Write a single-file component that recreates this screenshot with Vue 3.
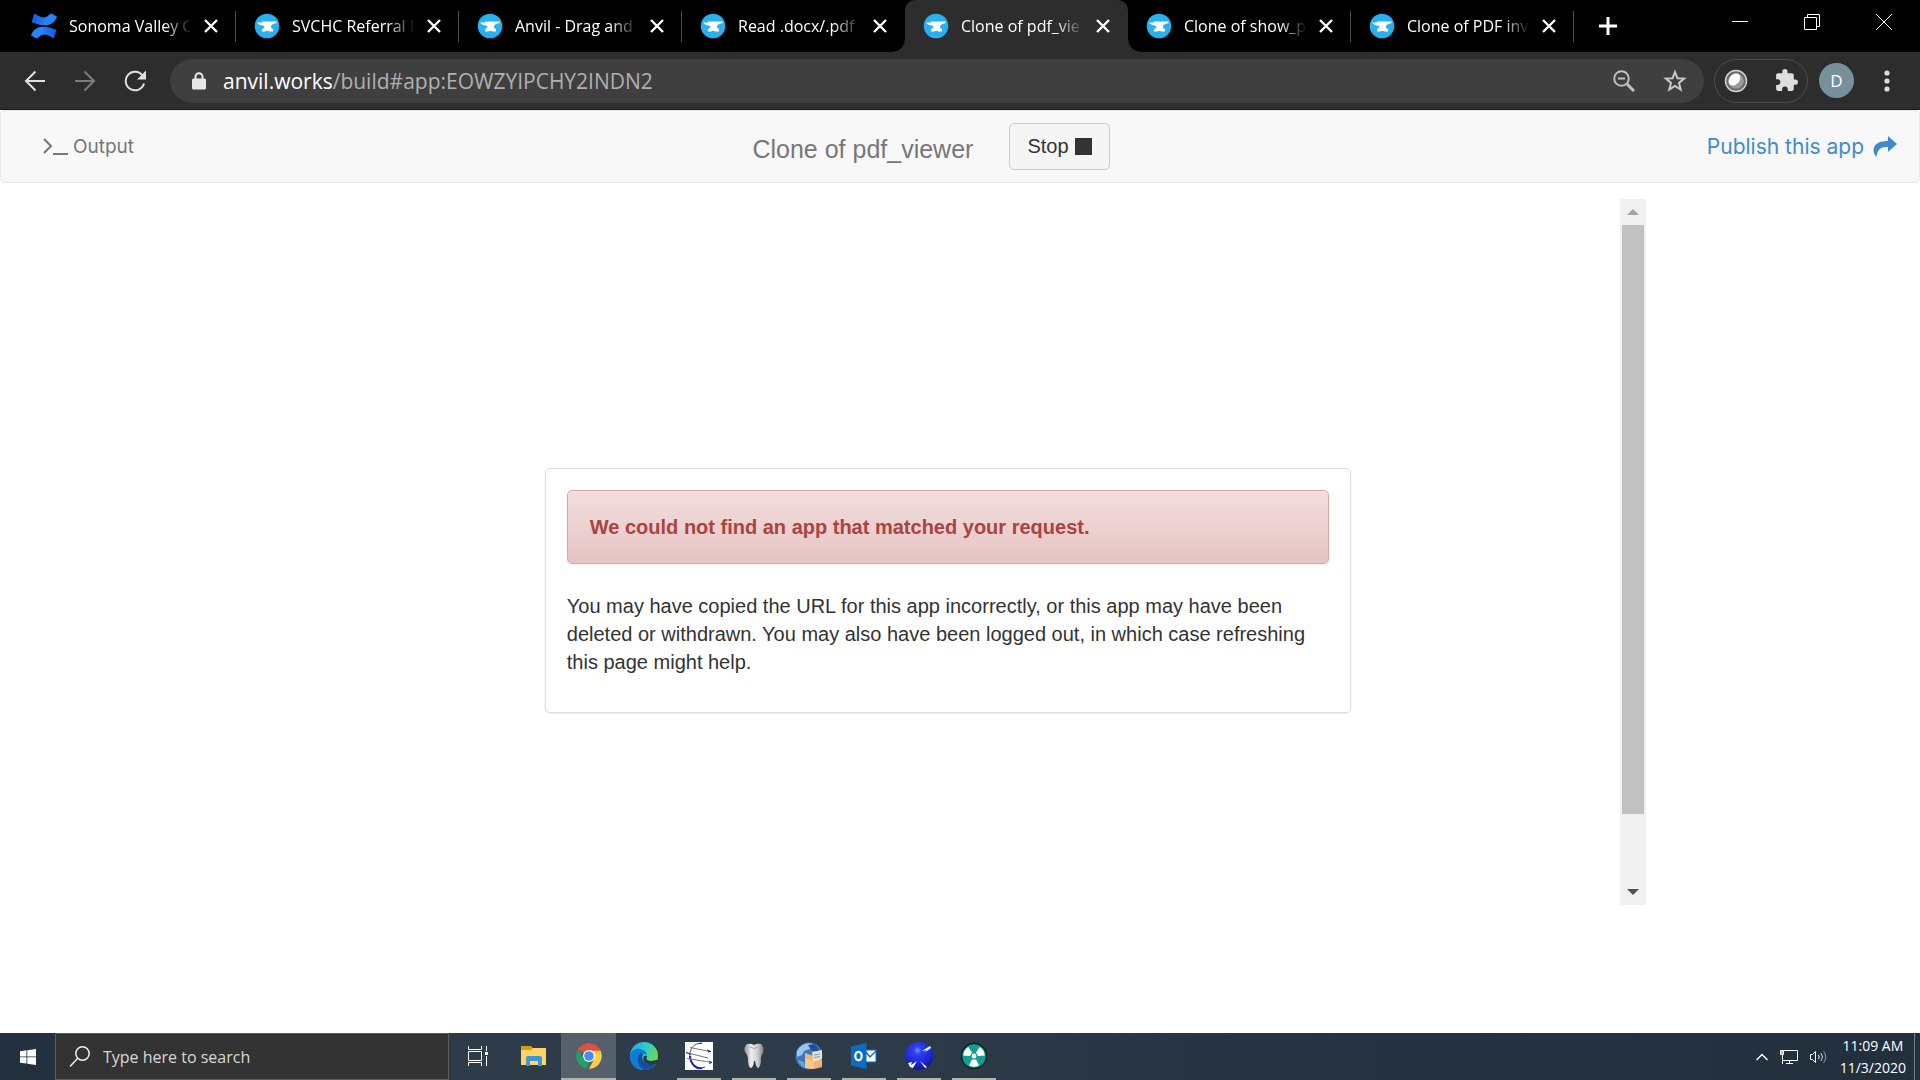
<template>
    <div class="screen">
        <header class="browser">
            <div class="tab-strip">
                <div v-for="(tab, index) in tabs" :key="tab.title" class="tab"
                    :class="{ active: index === activeTab, plain: index + 1 === activeTab }">
                    <button class="tab-title" @click="activeTab = index">
                        <svg v-if="tab.icon === 'confluence'" class="favicon" viewBox="0 0 26 26">
                            <defs>
                                <linearGradient id="conf-a" x1="0" y1="0" x2="1" y2="0">
                                    <stop offset="0" stop-color="#0f5bdc" />
                                    <stop offset="0.6" stop-color="#2684ff" />
                                </linearGradient>
                                <linearGradient id="conf-b" x1="1" y1="0" x2="0" y2="0">
                                    <stop offset="0" stop-color="#0f5bdc" />
                                    <stop offset="0.6" stop-color="#2684ff" />
                                </linearGradient>
                            </defs>
                            <path fill="url(#conf-a)"
                                d="M4 .8q5 3.700 8.500 3.700t6.500-3.200q.8-1 1.800-.5l4.500 2.400q.9.500.5 1.400-3.300 7-10.300 7.600Q8 12.500 1.300 9.500q-.8-.4-.5-1.300L3 1.500q.3-1 1-.7z" />
                            <path fill="url(#conf-b)"
                                d="M22 25.200q-5-3.700-8.500-3.700T7 24.700q-.8 1-1.800.5L.7 22.800q-.9-.5-.5-1.400 3.300-7 10.300-7.600 7.500-.3 14.200 2.700.8.400.5 1.300L23 24.500q-.3 1-1 .7z" />
                        </svg>
                        <svg v-else class="favicon" viewBox="0 0 26 26">
                            <circle cx="13" cy="13" r="12.3" fill="#28b1ec" />
                            <path fill="#fff"
                                d="M3 9.500h5v-.9h14.500v1.700c-3 .3-4.700 1.200-5.500 2.600-.4 1.400.5 2.500 2 3.200v2.500h-3.700c-.8-1.300-3.200-1.300-4 0H8v-2.500c1.700-.7 2.600-1.700 2.400-3.200-3-.2-5.800-1.200-7.400-3.400z" />
                        </svg>
                        <span class="tab-text">{{ tab.title }}</span>
                    </button>
                    <button class="tab-close" aria-label="Close tab">
                        <svg width="14" height="14" viewBox="0 0 14 14" stroke="#fff" stroke-width="2.4">
                            <path d="M1 1l12 12M13 1L1 13" />
                        </svg>
                    </button>
                </div>
                <button class="new-tab" aria-label="New tab">
                    <svg width="20" height="20" viewBox="0 0 20 20" stroke="#fff" stroke-width="3">
                        <path d="M10 1v18M1 10h18" />
                    </svg>
                </button>
                <div class="window-buttons">
                    <button aria-label="Minimize">
                        <svg width="16" height="16" viewBox="0 0 16 16"><path d="M0 7.500h16" /></svg>
                    </button>
                    <button aria-label="Restore">
                        <svg width="16" height="16" viewBox="0 0 16 16">
                            <path d="M.5 3.500h12v12H.5zM3.500 3V.5h12v12H13" />
                        </svg>
                    </button>
                    <button aria-label="Close">
                        <svg width="16" height="16" viewBox="0 0 16 16"><path d="M0 0l16 16M16 0L0 16" /></svg>
                    </button>
                </div>
            </div>

            <div class="toolbar">
                <div class="history">
                    <button aria-label="Back">
                        <svg width="22" height="22" viewBox="0 0 22 22" class="stroke">
                            <path d="M21 11H2M11.500 1.500L2 11l9.500 9.500" />
                        </svg>
                    </button>
                    <button aria-label="Forward" class="dim">
                        <svg width="22" height="22" viewBox="0 0 22 22" class="stroke">
                            <path d="M1 11h19M10.500 1.500L20 11l-9.500 9.500" />
                        </svg>
                    </button>
                    <button aria-label="Reload">
                        <svg width="22" height="22" viewBox="0 0 22 22">
                            <path class="stroke" d="M18.600 5.600A9.300 9.300 0 1 0 20 13.500" />
                            <path d="M22 .5V9.500h-9z" fill="currentColor" />
                        </svg>
                    </button>
                </div>
                <div class="omnibox">
                    <svg width="14" height="18" viewBox="0 0 14 18" class="lock">
                        <path d="M3.500 8V4.700a3.500 3.500 0 0 1 7 0V8" fill="none" stroke="#e8e8e8" stroke-width="2" />
                        <rect x="0" y="6.5" width="14" height="11" rx="1.5" fill="#e8e8e8" />
                    </svg>
                    <div class="url"><b>anvil.works</b>/build#app:EOWZYIPCHY2INDN2</div>
                    <button aria-label="Zoom">
                        <svg width="22" height="22" viewBox="0 0 22 22" fill="none" stroke="#c0c0c0"
                            stroke-width="2">
                            <circle cx="8.5" cy="8.5" r="7.3" />
                            <path d="M5 8.500h7" />
                            <path d="M14 14l7 7" stroke-width="3" />
                        </svg>
                    </button>
                    <button aria-label="Bookmark">
                        <svg width="24" height="24" viewBox="0 0 24 24" fill="none" stroke="#c8c8c8"
                            stroke-width="2">
                            <path
                                d="M12 3l2.400 6.200 6.800.4-5.200 4.300 1.700 6.600-5.700-3.600-5.700 3.600L8 13.900 2.800 9.600l6.800-.4z" />
                        </svg>
                    </button>
                </div>
                <div class="extensions">
                    <button aria-label="Extension">
                        <svg width="24" height="24" viewBox="0 0 24 24">
                            <circle cx="12" cy="12" r="10.5" fill="#686868" stroke="#d4d4d4" stroke-width="1.5" />
                            <circle cx="12" cy="12" r="7.8" fill="#999" />
                            <ellipse cx="10.5" cy="10.5" rx="5" ry="6.8" fill="#fff" transform="rotate(42 10.5 10.5)" />
                        </svg>
                    </button>
                    <button aria-label="Extensions">
                        <svg width="25" height="25" viewBox="0 0 24 24">
                            <path fill="#dedede"
                                d="M20.500 11H19V7c0-1.100-.9-2-2-2h-4V3.500a2.500 2.500 0 0 0-5 0V5H4c-1.100 0-2 .9-2 2v3.800h1.500a2.700 2.700 0 0 1 0 5.400H2V20c0 1.100.9 2 2 2h3.800v-1.500a2.700 2.700 0 0 1 5.400 0V22H17c1.100 0 2-.9 2-2v-4h1.500a2.500 2.500 0 0 0 0-5z" />
                        </svg>
                    </button>
                </div>
                <button class="avatar">D</button>
                <button class="menu" aria-label="Menu">
                    <svg width="6" height="22" viewBox="0 0 6 22" fill="#dedede">
                        <circle cx="3" cy="3" r="2.6" />
                        <circle cx="3" cy="11" r="2.6" />
                        <circle cx="3" cy="19" r="2.6" />
                    </svg>
                </button>
            </div>
        </header>

        <nav class="app-bar">
            <div class="side">
                <a href="#output" class="output">
                    <svg width="26" height="18" viewBox="0 0 26 18" fill="none" stroke="currentColor"
                        stroke-width="2">
                        <path d="M1 1l7 7-7 7M10 16h15" />
                    </svg>
                    <span>Output</span>
                </a>
            </div>
            <div class="run">
                <h1>Clone of pdf_viewer</h1>
                <button class="stop">Stop <span class="square"></span></button>
            </div>
            <div class="side right">
                <a href="#publish" class="publish">
                    <span>Publish this app</span>
                    <svg width="24" height="22" viewBox="0 0 24 22">
                        <path fill="#428bca" d="M15 0l9 8-9 8v-5C8 10.500 4.500 13 3.500 21 .5 18 0 14 1 11.500 2.500 7 8 5 15 5z" />
                    </svg>
                </a>
            </div>
        </nav>

        <main>
            <div class="frame">
                <div class="frame-body">
                    <section class="card">
                        <div class="alert" role="alert">We could not find an app that matched your request.</div>
                        <p>
                            You may have copied the URL for this app incorrectly, or this app may have been
                            deleted or withdrawn. You may also have been logged out, in which case refreshing
                            this page might help.
                        </p>
                    </section>
                </div>
                <div class="scrollbar">
                    <button aria-label="Scroll up">
                        <svg width="12" height="6" viewBox="0 0 12 6"><path d="M6 0l6 6H0z" fill="#a3a3a3" /></svg>
                    </button>
                    <div class="track">
                        <div class="thumb"></div>
                    </div>
                    <button aria-label="Scroll down">
                        <svg width="12" height="6" viewBox="0 0 12 6"><path d="M6 6l6-6H0z" fill="#505050" /></svg>
                    </button>
                </div>
            </div>
        </main>

        <footer class="taskbar">
            <button class="start" aria-label="Start">
                <svg width="16" height="16" viewBox="0 0 16 16" fill="#fff">
                    <path d="M0 2.200l6.500-.9v6.200H0zM7.300 1.200L16 0v7.500H7.300zM0 8.300h6.500v6.300L0 13.700zM7.300 8.300H16V16l-8.700-1.200z" />
                </svg>
            </button>
            <label class="search">
                <svg width="22" height="22" viewBox="0 0 22 22" fill="none" stroke="#f0f0f0" stroke-width="1.5">
                    <circle cx="13.5" cy="7.5" r="6.7" />
                    <path d="M8.700 12.300L1 20.500" />
                </svg>
                <input type="text" placeholder="Type here to search" aria-label="Type here to search">
            </label>
            <div class="apps">
                <button aria-label="Task View">
                    <svg width="22" height="20" viewBox="0 0 22 20" fill="none" stroke="#fff">
                        <path d="M.5 0v3.500h13V0M.5 5.500h13v9H.5zM.5 20v-3.500h13V20M18.500 0v5M18.500 10v10" />
                        <path d="M17 6h3v3h-3z" fill="#fff" stroke="none" />
                    </svg>
                </button>
                <button aria-label="File Explorer">
                    <svg width="28" height="24" viewBox="0 0 28 24">
                        <path d="M1 2h10l2 2v4H1z" fill="#d99a0c" />
                        <path d="M1 6h10l2-2h13v17H1z" fill="#ffd666" />
                        <path d="M6 22v-8q0-2 2-2h12q2 0 2 2v8h-4v-5h-8v5z" fill="#3a97da" />
                    </svg>
                </button>
                <button aria-label="Chrome" class="current">
                    <svg width="26" height="26" viewBox="0 0 26 26">
                        <path d="M13 13L1.900 6.600A12.800 12.800 0 0 1 24.100 6.600z" fill="#dd5144" />
                        <path d="M13 7.400h11.500A12.800 12.800 0 0 1 13 25.800l5-9.500z" fill="#ffcd46" />
                        <path d="M1.900 6.600l6 9.800L13 19l-2.500 6.500A12.800 12.800 0 0 1 1.900 6.600z" fill="#1da462" />
                        <path d="M2 6.600Q5 2 13 .2 21 1.500 24.500 7.400H13z" fill="#dd5144" />
                        <circle cx="13" cy="13" r="6" fill="#fff" />
                        <circle cx="13" cy="13" r="4.8" fill="#4c8bf5" />
                    </svg>
                </button>
                <button aria-label="Edge">
                    <svg width="28" height="28" viewBox="0 0 28 28">
                        <defs>
                            <linearGradient id="edge-top" x1="0" y1="0" x2="1" y2="0.5">
                                <stop offset="0" stop-color="#1ea5e3" />
                                <stop offset="0.5" stop-color="#32c8d2" />
                                <stop offset="1" stop-color="#6bdc4a" />
                            </linearGradient>
                        </defs>
                        <circle cx="14" cy="14" r="14" fill="url(#edge-top)" />
                        <path d="M0 14C.5 8 6 6 11 7c4 1 6 3.500 6 6-1-1-3-1.500-4-.5-3 3 0 9 5 9.500 3 .3 6-.5 8-1.500C23 25.500 19 28 14 28 6 28 0 22 0 14z" fill="#0c7ed8" />
                        <path d="M10.500 11c-4 3-4 12 3.500 17 5 0 9-2.500 12-7.500-5 3-12 1.500-13.500-4-.5-2 0-3 .5-4-1-.8-2-1.500-2.500-1.500z" fill="#134f9c" />
                        <path d="M17 14.500c-.3 1-1 2-.3 3 1.800 2 6.500 1.600 9.800.2l2 .3-1.700 3.200c-4.500 2.300-11.800 1.500-13.300-3.200-.5-2 0-4 1.500-4.500 1-.3 2 .1 2 1z" fill="#2c3945" />
                    </svg>
                </button>
                <button aria-label="Eclipse" class="open">
                    <svg width="28" height="28" viewBox="0 0 28 28" fill="none">
                        <path d="M0 0h28v28H0z" fill="#fff" />
                        <path d="M17 1.500C9 0 3.500 8 5 16" stroke="#555" />
                        <path d="M5 14c.5 8 6 13.500 12 12" stroke="#1d1db0" stroke-width="2" />
                        <path d="M5 5.500l20 4M1 10.500l22 5.500M2 16.500l25 4" stroke="#777" />
                        <path d="M22 8l4 1.500-3 .5M24 19l3 1.500-3 1M1 10.500l5 2M14 1.500l3-.5M17 26l3-1" stroke="#2222c8" />
                    </svg>
                </button>
                <button aria-label="Dental" class="open">
                    <svg width="20" height="26" viewBox="0 0 20 26">
                        <defs>
                            <linearGradient id="tooth" x1="0" y1="0" x2="1" y2="0">
                                <stop offset="0" stop-color="#8d8d8d" />
                                <stop offset="0.35" stop-color="#eee" />
                                <stop offset="0.7" stop-color="#ccc" />
                                <stop offset="1" stop-color="#777" />
                            </linearGradient>
                        </defs>
                        <path d="M3 1q3.500-1 7 1 3.500-2 7-1 4 3 2 9-3 4-2 8-1 7-3 7-2-1-3-7h-1q-.5 6-3 7-3-1-3-8Q4 12 1 9-1 4 3 1z" fill="url(#tooth)" />
                        <path d="M6 4q4 3 8 0" fill="none" stroke="#aaa" />
                    </svg>
                </button>
                <button aria-label="Network files" class="open">
                    <svg width="28" height="28" viewBox="0 0 28 28">
                        <circle cx="14" cy="14" r="13.5" fill="#3b78bf" />
                        <path d="M2 9Q8-1 18 2l-3 5-6 2-2 4-5 2z" fill="#9cc4e6" />
                        <path d="M13 3l6-1 5 5-2 3-6-2z" fill="#1f4f9c" />
                        <path d="M3 18l6 2 1 6q-5-2-7-8z" fill="#6ba3d8" />
                        <path d="M10 11l6 2 11 5v7l-8 2-9-1z" fill="#f4b276" />
                        <path d="M17 10l10-2v9l-9 3z" fill="#dce3dc" />
                        <path d="M19 13l6-1M19 15.500l6-1" stroke="#8c9b91" />
                        <path d="M10 16l9 3v8l-9-1z" fill="#fdc48c" />
                    </svg>
                </button>
                <button aria-label="Outlook" class="open">
                    <svg width="26" height="26" viewBox="0 0 26 26">
                        <path d="M14 7h11v12H14z" fill="#fff" stroke="#0a6cc4" />
                        <path d="M14 8l5 6 6-6" fill="none" stroke="#0a6cc4" stroke-width="1.5" />
                        <path d="M0 3.500L15.500 0v26L0 22.500z" fill="#0a6cc4" />
                        <ellipse cx="7.5" cy="13" rx="3.2" ry="4.2" fill="none" stroke="#fff" stroke-width="2.2" />
                    </svg>
                </button>
                <button aria-label="Blue sphere" class="open">
                    <svg width="28" height="28" viewBox="0 0 28 28">
                        <defs>
                            <radialGradient id="sphere" cx="0.45" cy="0.3" r="0.7">
                                <stop offset="0" stop-color="#7f8cff" />
                                <stop offset="0.2" stop-color="#2e42ee" />
                                <stop offset="0.7" stop-color="#1b25d6" />
                                <stop offset="1" stop-color="#111a78" />
                            </radialGradient>
                        </defs>
                        <circle cx="14" cy="14" r="14" fill="url(#sphere)" />
                        <path d="M25 4l-8 5 5-1-3 3 7-5zM3 21l4-1-1 3 6-4-4 7-3-1zM15 19l7 6-2 1z" fill="#fff" />
                    </svg>
                </button>
                <button aria-label="Imaging" class="open">
                    <svg width="28" height="28" viewBox="0 0 28 28">
                        <circle cx="14" cy="14" r="12.5" fill="#12a094" stroke="#06231f" stroke-width="1.5" />
                        <g fill="#fff">
                            <path d="M12 17.500h4l3 6q-5 2.500-10 0z" />
                            <path d="M12 17.500h4l3 6q-5 2.500-10 0z" transform="rotate(120 14 14)" />
                            <path d="M12 17.500h4l3 6q-5 2.500-10 0z" transform="rotate(240 14 14)" />
                            <circle cx="14" cy="14" r="3" stroke="#12a094" />
                        </g>
                    </svg>
                </button>
            </div>
            <div class="tray">
                <button aria-label="Show hidden icons">
                    <svg width="12" height="8" viewBox="0 0 12 8" fill="none" stroke="#fff" stroke-width="1.5">
                        <path d="M.5 7L6 1.500 11.500 7" />
                    </svg>
                </button>
                <button aria-label="Network">
                    <svg width="18" height="16" viewBox="0 0 18 16" fill="none" stroke="#fff">
                        <path d="M4 1.500h13.500v10H2.500V6M9.500 12v3M6 14.500h7M2.500 6v9" />
                        <path d="M.5 1.500h3v4h-3z" fill="#bbb" />
                    </svg>
                </button>
                <button aria-label="Volume">
                    <svg width="18" height="16" viewBox="0 0 18 16" fill="none" stroke="#fff">
                        <path d="M.5 5.500h2l3-3v11l-3-3h-2zM8.500 6q1.500 2 0 4" />
                        <path d="M11 4q3 4 0 8" opacity="0.8" />
                        <path d="M13.500 2q4.500 6 0 12" opacity="0.5" />
                    </svg>
                </button>
                <button class="clock">
                    <span>11:09 AM</span>
                    <span>11/3/2020</span>
                </button>
            </div>
        </footer>
    </div>
</template>

<script setup>
import { ref } from 'vue';

const activeTab = ref(4);

const tabs = [
    { icon: 'confluence', title: 'Sonoma Valley C' },
    { icon: 'anvil', title: 'SVCHC Referral F' },
    { icon: 'anvil', title: 'Anvil - Drag and' },
    { icon: 'anvil', title: 'Read .docx/.pdf' },
    { icon: 'anvil', title: 'Clone of pdf_vie' },
    { icon: 'anvil', title: 'Clone of show_p' },
    { icon: 'anvil', title: 'Clone of PDF inv' },
];
</script>

<style>
body {
    background: #fff;
}
</style>

<style scoped>
.screen {
    display: flex;
    flex-direction: column;
    min-height: 100vh;
    font-family: "Open Sans", "Noto Sans", sans-serif;
}

.screen * {
    box-sizing: border-box;
}

button {
    display: flex;
    align-items: center;
    justify-content: center;
    padding: 0;
    border: none;
    background: none;
    color: inherit;
    font-family: inherit;
}

svg {
    display: block;
    flex-shrink: 0;
}

a {
    text-decoration: none;
}

/* Tabs */
.tab-strip {
    display: flex;
    height: 52px;
    padding-left: 13px;
    background: #000;
    color: #fff;
}

.tab {
    position: relative;
    display: flex;
    align-items: center;
    flex: 0 1 223px;
    min-width: 0;
    padding: 0 18px;
}

.tab::after {
    content: "";
    position: absolute;
    right: 0;
    top: 11px;
    width: 1px;
    height: 31px;
    background: #4d4d4d;
}

.tab.plain::after {
    display: none;
}

.tab.active {
    border-radius: 10px 10px 0 0;
    background: #2d2d2d;
}

/* Curved feet of the selected tab */
.tab.active::before,
.tab.active::after {
    top: auto;
    bottom: 0;
    width: 12px;
    height: 12px;
}

.tab.active::before {
    content: "";
    position: absolute;
    left: -12px;
    background: radial-gradient(circle at 0 0, #000 11px, #2d2d2d 12px);
}

.tab.active::after {
    right: -12px;
    background: radial-gradient(circle at 100% 0, #000 11px, #2d2d2d 12px);
}

.tab-title {
    gap: 12px;
    flex: 1;
    min-width: 0;
    font-size: 16px;
}

.favicon {
    width: 26px;
    height: 26px;
}

.tab-text {
    flex: 1;
    overflow: hidden;
    white-space: nowrap;
    text-align: left;
    line-height: 26px;
    -webkit-mask-image: linear-gradient(to left, transparent, #000 28px);
    mask-image: linear-gradient(to left, transparent, #000 28px);
}

.tab-close {
    margin-left: 12px;
}

.new-tab {
    width: 68px;
}

.window-buttons {
    display: flex;
    align-items: flex-start;
    margin-left: auto;
}

.window-buttons button {
    width: 72px;
    height: 44px;
}

.window-buttons path {
    fill: none;
    stroke: #fff;
}

/* Address bar */
.toolbar {
    display: flex;
    align-items: center;
    height: 58px;
    padding-left: 24px;
    border-bottom: 1px solid #1c1c1c;
    background: #2d2d2d;
    color: #e0e0e0;
}

.history {
    display: flex;
    gap: 28px;
    margin-right: 24px;
}

.stroke {
    fill: none;
    stroke: currentColor;
    stroke-width: 2;
}

.dim {
    color: #7d7d7d;
}

.omnibox {
    display: flex;
    align-items: center;
    flex: 1;
    gap: 28px;
    height: 44px;
    padding: 0 17px 0 22px;
    border-radius: 22px;
    background: #3f3f3f;
}

.lock {
    margin-right: -11px;
}

.url {
    flex: 1;
    color: #b0b0b0;
    font-size: 21px;
    line-height: 28px;
}

.url b {
    color: #fff;
    font-weight: 400;
}

.extensions {
    display: flex;
    align-items: center;
    justify-content: space-between;
    width: 94px;
    height: 44px;
    margin: 0 11px 0 10px;
    padding: 0 8px 0 9px;
    border: 1px solid #4c4c4c;
    border-radius: 22px;
}

.avatar {
    width: 35px;
    height: 35px;
    border-radius: 50%;
    background: #78909c;
    color: #fff;
    font-size: 17px;
}

.menu {
    width: 66px;
}

/* App bar */
.app-bar {
    display: flex;
    align-items: center;
    height: 73px;
    padding: 0 22px 0 42px;
    border: 1px solid #e7e7e7;
    border-radius: 5px;
    background: #f8f8f8;
    font-family: Inter, sans-serif;
}

.side {
    display: flex;
    flex: 1;
}

.right {
    justify-content: flex-end;
}

.output,
.publish {
    display: flex;
    align-items: center;
}

.output {
    gap: 4px;
    color: #777;
    font-size: 19px;
}

.publish {
    gap: 9px;
    color: #428bca;
    font-size: 21px;
}

.run {
    display: flex;
    align-items: center;
    gap: 36px;
    padding-right: 78px;
    font-family: "Liberation Sans", Arial, sans-serif;
}

h1 {
    margin: 5px 0 0;
    color: #777;
    font-size: 25px;
    font-weight: 400;
    line-height: 30px;
}

.stop {
    gap: 6px;
    height: 47px;
    padding: 0 17px;
    border: 1px solid #ccc;
    border-radius: 5px;
    background: #f5f5f5;
    color: #333;
    font-size: 20px;
}

.square {
    width: 17px;
    height: 17px;
    background: #333;
}

/* Running app */
main {
    display: flex;
    flex: 1;
    justify-content: center;
    padding: 16px 0 128px;
}

.frame {
    display: flex;
    flex: 1;
    max-width: 1372px;
}

.frame-body {
    display: flex;
    align-items: center;
    justify-content: center;
    flex: 1;
    padding: 77px 0 0 2px;
}

.card {
    width: 60%;
    min-width: 400px;
    padding: 21px;
    border: 1px solid #ddd;
    border-radius: 5px;
    box-shadow: 0 1px 2px rgba(0, 0, 0, 0.08);
    color: #333;
    font-family: "Liberation Sans", Arial, sans-serif;
    font-size: 20px;
    line-height: 28px;
}

.alert {
    padding: 22px;
    border: 1px solid #dca7a7;
    border-radius: 5px;
    background: linear-gradient(#f2dede, #e7c3c3);
    box-shadow: 0 1px 2px rgba(0, 0, 0, 0.08), inset 0 1px 0 rgba(255, 255, 255, 0.25);
    color: #a94442;
    font-weight: 700;
}

.card p {
    margin: 28px 0 15px;
}

.scrollbar {
    display: flex;
    flex-direction: column;
    width: 26px;
    background: #f0f0f0;
}

.scrollbar button {
    height: 26px;
}

.track {
    flex: 1;
    padding: 0 2px;
}

.thumb {
    height: 90%;
    background: #c1c1c1;
}

/* Taskbar */
.taskbar {
    display: flex;
    height: 47px;
    background: linear-gradient(90deg, #22303e, #2e3b48 25%, #2e3b48 45%, #263340 65%, #22303d);
    color: #fff;
}

.start {
    width: 55px;
}

.search {
    display: flex;
    align-items: center;
    gap: 12px;
    width: 394px;
    padding: 0 13px;
    border: 1px solid #5c5c5c;
    background: #333;
}

.search input {
    flex: 1;
    min-width: 0;
    padding: 0;
    border: none;
    outline: none;
    background: none;
    color: #fff;
    font-family: inherit;
    font-size: 16px;
}

.search input::placeholder {
    color: #d8d8d8;
    opacity: 1;
}

.apps {
    display: flex;
    margin-left: 2px;
}

.apps button {
    width: 55px;
    border-bottom: 2px solid transparent;
}

.apps .current {
    border-color: #b5b3ae;
    background: #56606b;
}

.apps .open {
    width: 44px;
    margin: 0 5px 0 6px;
    border-color: #b5b3ae;
}

.tray {
    display: flex;
    align-items: center;
    gap: 12px;
    margin-left: auto;
    margin-right: 5px;
    padding-right: 8px;
    border-right: 1px solid #75808a;
}

.clock {
    flex-direction: column;
    font-size: 14px;
    line-height: 22px;
}
</style>
